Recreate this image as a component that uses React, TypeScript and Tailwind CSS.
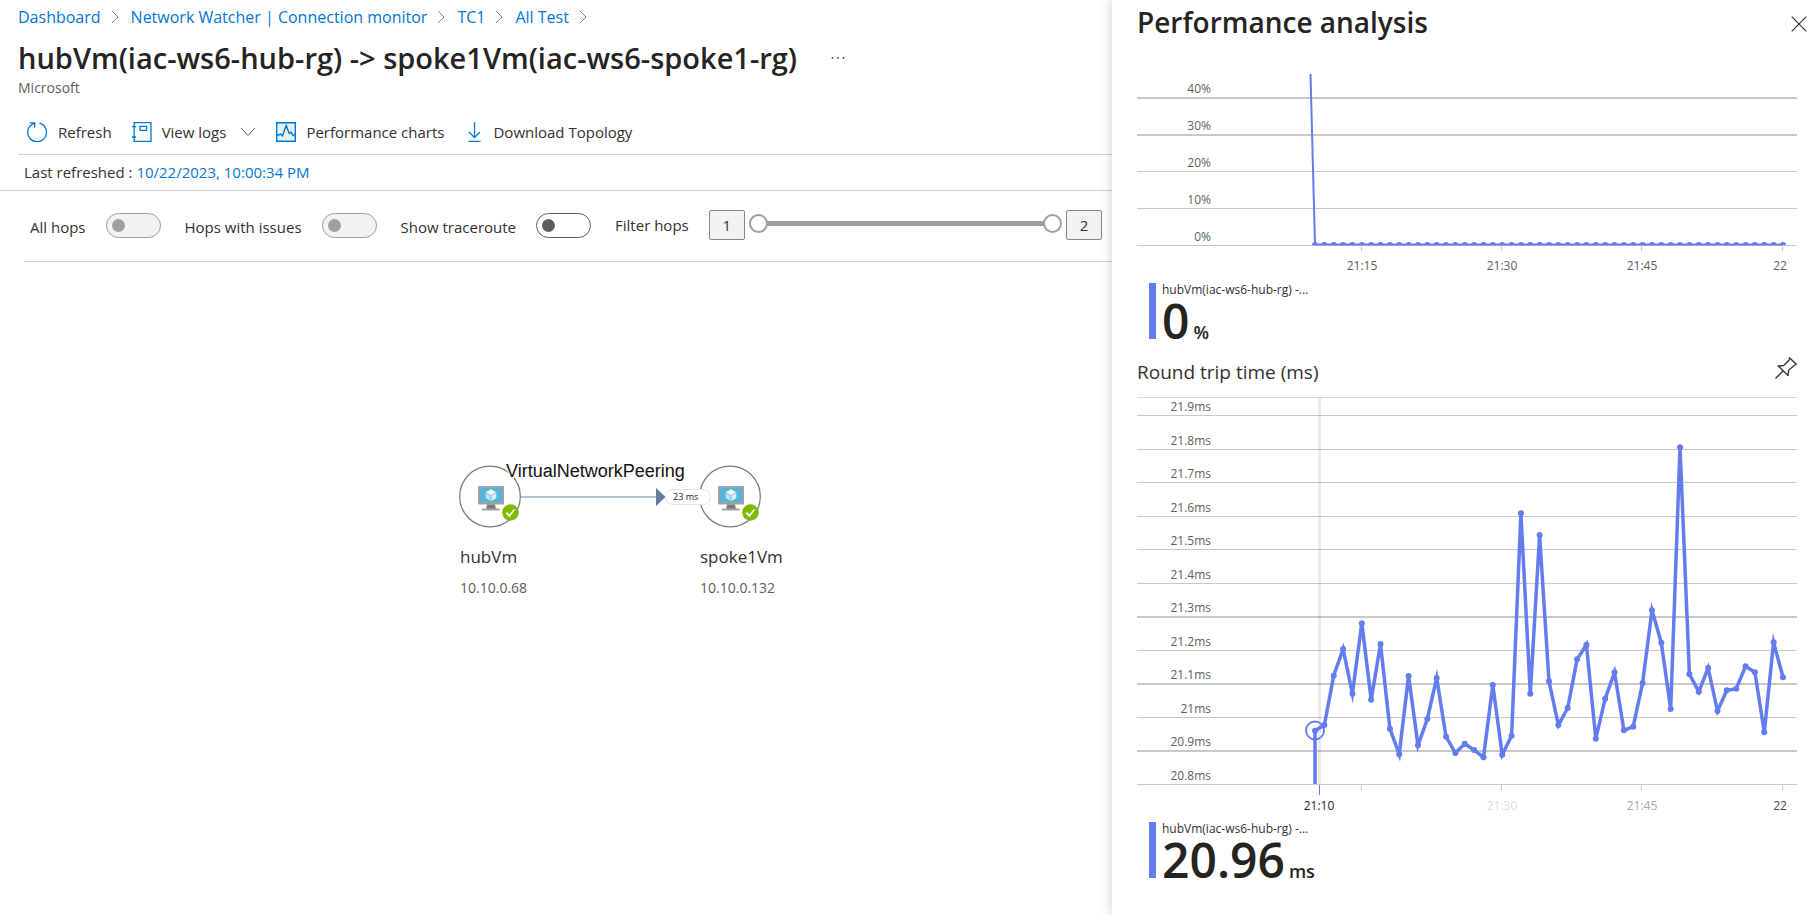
import { Fragment, useState } from "react";

const CHART_WIDTH = 660;
const FIRST_SAMPLE_X = 178;
const SAMPLE_STEP = 9.36;
const SERIES = "#637cef";
const GRID = "#c8c8c8";

/* Vertical position of each one-minute sample, 21:10 to 22:00 */
const rttSamples = [
  333.7, 328, 278.7, 252, 296.7, 226.3, 302.7, 247, 331.7, 357.3, 279, 348.3, 322, 281, 339.7, 356,
  346.7, 353, 360.3, 288, 357.7, 338.7, 116.3, 296.7, 138, 284.3, 328, 311, 262.3, 247.7, 341.7,
  301.7, 275.3, 333.3, 329.7, 286, 213.3, 245.7, 312, 50.3, 277, 294.7, 271, 314, 293.3, 291.7,
  269.3, 275.3, 335.3, 245.3, 280.3,
];

const rttGrid = [
  { label: "21.9ms", y: 18, h: 1 },
  { label: "21.8ms", y: 52, h: 1 },
  { label: "21.7ms", y: 85, h: 1 },
  { label: "21.6ms", y: 119, h: 1 },
  { label: "21.5ms", y: 152, h: 1 },
  { label: "21.4ms", y: 186, h: 1 },
  { label: "21.3ms", y: 219, h: 2 },
  { label: "21.2ms", y: 253, h: 1 },
  { label: "21.1ms", y: 286, h: 2 },
  { label: "21ms", y: 320, h: 1 },
  { label: "20.9ms", y: 353, h: 2 },
  { label: "20.8ms", y: 387, h: 1 },
];

const lossGrid = [
  { label: "40%", y: 23, h: 2 },
  { label: "30%", y: 60, h: 2 },
  { label: "20%", y: 97, h: 1 },
  { label: "10%", y: 134, h: 1 },
  { label: "0%", y: 171, h: 1 },
];

const sampleX = (i: number) => FIRST_SAMPLE_X + i * SAMPLE_STEP;

function Grid({ rows }: { rows: { label: string; y: number; h: number }[] }) {
  return (
    <>
      {rows.map((r) => (
        <Fragment key={r.label}>
          <rect x="0" y={r.y} width={CHART_WIDTH} height={r.h} fill={GRID} />
          <text x="74" y={r.y - 4} textAnchor="end" fill="#605e5c">
            {r.label}
          </text>
        </Fragment>
      ))}
    </>
  );
}

function LossChart() {
  return (
    <svg viewBox="0 0 660 204" className="block w-full text-xs" role="img" aria-label="Checks failed">
      <Grid rows={lossGrid} />
      {[225, 365, 505, 646].map((x) => (
        <rect key={x} x={x - 1} y="172" width="1" height="5" fill={GRID} />
      ))}
      <path d="M173.500 0L178 170.500H646" fill="none" stroke={SERIES} strokeWidth="2" />
      {rttSamples.map((_, i) => (
        <path key={i} d={`M${(sampleX(i) - 3).toFixed(1)} 171a3 3 0 0 1 6 0z`} fill={SERIES} />
      ))}
      <g fill="#605e5c" textAnchor="middle">
        <text x="225" y="196">21:15</text>
        <text x="365" y="196">21:30</text>
        <text x="505" y="196">21:45</text>
        <text x="643" y="196">22</text>
      </g>
    </svg>
  );
}

function RoundTripChart() {
  const line = rttSamples.map((y, i) => `${sampleX(i).toFixed(1)} ${y}`).join("L");
  return (
    <svg viewBox="0 0 660 420" className="block w-full text-xs" role="img" aria-label="Round trip time">
      <rect x="0" y="0" width={CHART_WIDTH} height="1" fill="#d8d8d8" />
      <Grid rows={rttGrid} />
      <rect x="181" y="0" width="3" height="387" fill="#000" fillOpacity="0.08" />
      {[225, 365, 505, 646].map((x) => (
        <rect key={x} x={x - 1} y="388" width="1" height="5" fill={GRID} />
      ))}
      <path d={`M178 387L${line}`} fill="none" stroke={SERIES} strokeWidth="3.500" strokeMiterlimit="6" />
      {rttSamples.map((y, i) => (
        <circle key={i} cx={sampleX(i)} cy={y} r="3" fill={SERIES} />
      ))}
      <circle cx="178" cy="333.500" r="9" fill="none" stroke={SERIES} strokeWidth="1.800" />
      <rect x="182" y="388" width="1" height="10" fill={SERIES} />
      <g textAnchor="middle">
        <text x="182" y="413" fill="#252423">21:10</text>
        <text x="365" y="413" fill="#dcdcdc">21:30</text>
        <text x="505" y="413" fill="#a6a6a6">21:45</text>
        <text x="643" y="413" fill="#484644">22</text>
      </g>
    </svg>
  );
}

function Metric({ value, unit }: { value: string; unit: string }) {
  return (
    <div className="ml-3 flex h-14 border-l-[7px] border-[#637cef] pl-[6px]">
      <div className="flex flex-col">
        <p className="text-xs leading-[13px] text-[#323130]">hubVm(iac-ws6-hub-rg) -...</p>
        <p className="flex items-baseline gap-1 font-semibold leading-[50px] text-[#252423]">
          <span className="text-[48px]">{value}</span>
          <span className="text-lg leading-5">{unit}</span>
        </p>
      </div>
    </div>
  );
}

function Crumb({ children }: { children: string }) {
  return (
    <li className="flex items-center gap-[10px]">
      <a href="#" className="text-[#0078d4]">{children}</a>
      <svg width="8" height="14" viewBox="0 0 8 14" fill="none" stroke="#8a8886" aria-hidden="true">
        <path d="M1 1L7 7L1 13" />
      </svg>
    </li>
  );
}

function RefreshIcon() {
  return (
    <svg width="20" height="20" viewBox="0 0 20 20" fill="none" stroke="#0078d4" strokeWidth="1.300" aria-hidden="true">
      <path d="M12.500 1.200A9.400 9.400 0 1 1 4.200 3L7.600 .9M2.700 .8H7.700V5.600" />
    </svg>
  );
}

function LogsIcon() {
  return (
    <svg width="20" height="20" viewBox="0 0 20 20" fill="none" stroke="#0078d4" strokeWidth="1.300" aria-hidden="true">
      <path d="M2.200 .7H19V19.300H2.200ZM0 4.700H4M0 15H4M8 4.300H14.600V8.300H8Z" />
    </svg>
  );
}

function ChartsIcon() {
  return (
    <svg width="20" height="20" viewBox="0 0 20 20" fill="none" stroke="#0078d4" strokeWidth="1.400" aria-hidden="true">
      <path d="M.7 .7H19.300V19.300H.7Z" fill="#e6f2fb" />
      <path d="M1 13.500L4.600 12L6.500 14L10.200 3.500L13.300 11.500L15 10L17 13.600L19 12.300" />
    </svg>
  );
}

function DownloadIcon() {
  return (
    <svg width="13" height="20" viewBox="0 0 13 20" fill="none" stroke="#0078d4" strokeWidth="1.300" aria-hidden="true">
      <path d="M6.500 0V15.500M1 10L6.500 15.500L12 10M.5 19.300H12.500" />
    </svg>
  );
}

function Toggle({ id, label, disabled }: { id: string; label: string; disabled?: boolean }) {
  return (
    <div className="flex items-center gap-5">
      <label htmlFor={id} className="pt-1">{label}</label>
      <input
        id={id}
        type="checkbox"
        role="switch"
        disabled={disabled}
        className="flex h-[25px] w-[55px] appearance-none items-center rounded-full border border-[#605e5c] bg-white px-[5px] before:size-[13px] before:rounded-full before:bg-[#605e5c] checked:justify-end disabled:border-[#a19f9d] disabled:bg-[#f3f2f1] disabled:before:bg-[#a19f9d]"
      />
    </div>
  );
}

const hopBox =
  "h-[30px] w-9 rounded-[2px] border border-[#8a8886] bg-[#f3f2f1] text-center text-[15px] text-[#323130]";
const rangeInput =
  "pointer-events-none col-start-1 row-start-1 h-[19px] w-full appearance-none bg-transparent [&::-webkit-slider-thumb]:pointer-events-auto [&::-webkit-slider-thumb]:size-[19px] [&::-webkit-slider-thumb]:appearance-none [&::-webkit-slider-thumb]:rounded-full [&::-webkit-slider-thumb]:border-2 [&::-webkit-slider-thumb]:border-[#a19f9d] [&::-webkit-slider-thumb]:bg-white";

function HopFilter() {
  const [low, setLow] = useState(1);
  const [high, setHigh] = useState(2);
  return (
    <div className="flex min-w-0 flex-1 items-center">
      <span id="filter-hops" className="mr-5 whitespace-nowrap">Filter hops</span>
      <input aria-label="First hop" readOnly value={low} className={hopBox} />
      <div className="mx-1 grid flex-1 items-center pb-1" role="group" aria-labelledby="filter-hops">
        <div className="col-start-1 row-start-1 mx-2 h-[5px] bg-[#a19f9d]" />
        <input type="range" aria-label="Lowest hop" min={1} max={2} value={low} onChange={(e) => setLow(Number(e.target.value))} className={rangeInput} />
        <input type="range" aria-label="Highest hop" min={1} max={2} value={high} onChange={(e) => setHigh(Number(e.target.value))} className={rangeInput} />
      </div>
      <input aria-label="Last hop" readOnly value={high} className={hopBox} />
    </div>
  );
}

function VmNode({ x, name, ip }: { x: number; name: string; ip: string }) {
  return (
    <g transform={`translate(${x} 0)`}>
      <circle cx="31" cy="36.500" r="30.300" fill="#fff" stroke="#7a7a7a" strokeWidth="1.300" />
      <rect x="19" y="26" width="26" height="18.500" rx="0.800" fill="#a0a1a2" />
      <rect x="20.500" y="27.500" width="23" height="14.500" fill="#59b4d9" />
      <path d="M28 44.500H36L37 49H27Z" fill="#7a7a7a" />
      <rect x="23" y="48.500" width="17.500" height="2" fill="#a0a1a2" />
      <path d="M32 29.300L37.300 32.200L32 35.200L26.700 32.200Z" fill="#fff" />
      <path d="M26.700 33L31.600 35.800V41L26.700 38.300Z" fill="#b9e1f1" />
      <path d="M37.300 33L32.400 35.800V41L37.300 38.300Z" fill="#d9eff8" />
      <circle cx="51.500" cy="52.500" r="8.300" fill="#7fba00" />
      <path d="M47.300 52.700L50.300 55.800L55.500 49.500" fill="none" stroke="#fff" strokeWidth="1.800" />
      <text x="1" y="103" fontSize="17" fill="#323130">{name}</text>
      <text x="1" y="133" fontSize="14" fill="#605e5c">{ip}</text>
    </g>
  );
}

function Topology() {
  return (
    <svg width="330" height="150" viewBox="0 0 330 150" role="img" aria-label="Topology">
      <VmNode x={0} name="hubVm" ip="10.10.0.68" />
      <VmNode x={240} name="spoke1Vm" ip="10.10.0.132" />
      <path d="M62 37H198" stroke="#b3c1d1" strokeWidth="2" />
      <path d="M197 28L206.500 37L197 46Z" fill="#5f7d9c" />
      <rect x="206.500" y="29.500" width="45" height="15" rx="7.500" fill="#fff" stroke="#e3e3e3" />
      <text x="214" y="40" fontSize="9" fill="#252423">23 ms</text>
      <text
        x="47"
        y="17"
        fontSize="18"
        fill="#111"
        stroke="#fff"
        strokeWidth="3"
        paintOrder="stroke"
        className="font-['Liberation_Sans',sans-serif]"
      >
        VirtualNetworkPeering
      </text>
    </svg>
  );
}

const command = "flex items-center text-[15px] leading-5";

export default function App() {
  return (
    <div className="flex min-h-screen bg-white font-['Open_Sans',sans-serif] text-[15px] text-[#323130]">
      <main className="min-w-0 flex-1">
        <nav aria-label="Breadcrumb" className="pl-[18px] pt-[5px]">
          <ol className="flex gap-3 text-base leading-6">
            <Crumb>Dashboard</Crumb>
            <Crumb>Network Watcher | Connection monitor</Crumb>
            <Crumb>TC1</Crumb>
            <Crumb>All Test</Crumb>
          </ol>
        </nav>
        <header className="pl-[18px] pt-[9px]">
          <div className="flex items-center gap-[34px]">
            <h1 className="whitespace-nowrap text-[29px] font-semibold leading-10 text-[#252423]">
              hubVm(iac-ws6-hub-rg) -&gt; spoke1Vm(iac-ws6-spoke1-rg)
            </h1>
            <button type="button" aria-label="More">
              <svg width="14" height="4" viewBox="0 0 14 4" fill="#484644">
                <circle cx="1.500" cy="2" r="0.900" />
                <circle cx="7" cy="2" r="0.900" />
                <circle cx="12.500" cy="2" r="0.900" />
              </svg>
            </button>
          </div>
          <p className="text-sm leading-5 text-[#605e5c]">Microsoft</p>
        </header>
        <div className="ml-[18px] flex h-[57px] items-center border-b border-[#d2d0ce] pl-[9px] pt-[12px]">
          <button type="button" className={`${command} gap-[11px]`}><RefreshIcon />Refresh</button>
          <button type="button" className={`${command} ml-5 gap-[10px]`}>
            <LogsIcon />View logs
            <svg width="16" height="10" viewBox="0 0 16 10" fill="none" stroke="#605e5c" className="ml-1" aria-hidden="true">
              <path d="M1 1L8 8.500L15 1" />
            </svg>
          </button>
          <button type="button" className={`${command} ml-5 gap-[10px]`}><ChartsIcon />Performance charts</button>
          <button type="button" className={`${command} ml-6 gap-3`}><DownloadIcon />Download Topology</button>
        </div>
        <div className="flex h-9 items-center border-b border-[#d2d0ce] pl-6">
          <p>Last refreshed : <a href="#" className="text-[#0078d4]">10/22/2023, 10:00:34 PM</a></p>
        </div>
        <div className="ml-6 flex h-[71px] items-center gap-6 border-b border-[#d2d0ce] pb-[2px] pl-[6px] pr-[10px]">
          <Toggle id="all-hops" label="All hops" disabled />
          <Toggle id="issue-hops" label="Hops with issues" disabled />
          <Toggle id="traceroute" label="Show traceroute" />
          <HopFilter />
        </div>
        <section className="pl-[459px] pt-[198px]">
          <Topology />
        </section>
      </main>

      <aside className="w-[703px] shrink-0 bg-white pl-[25px] pr-[18px] shadow-[0_0_12px_rgba(0,0,0,0.2)]">
        <header className="-mr-[10px] flex items-center justify-between pt-[2px]">
          <h2 className="text-[28px] font-semibold leading-10 text-[#252423]">Performance analysis</h2>
          <button type="button" aria-label="Close" className="pt-1">
            <svg width="16" height="16" viewBox="0 0 16 16" fill="none" stroke="#323130" strokeWidth="1.200">
              <path d="M.7 .7L15.300 15.300M15.300 .7L.7 15.300" />
            </svg>
          </button>
        </header>
        <div className="pt-8"><LossChart /></div>
        <div className="pt-[5px]"><Metric value="0" unit="%" /></div>
        <div className="flex items-center justify-between pb-[5px] pt-[13px]">
          <h3 className="text-[19px] leading-10">Round trip time (ms)</h3>
          <button type="button" aria-label="Pin chart" className="pb-2">
            <svg width="22" height="22" viewBox="0 0 22 22" fill="none" stroke="#323130" strokeWidth="1.300" strokeLinejoin="round">
              <path d="M14.500 .8L21.300 7.300L19.500 8.300L13.600 13.200L13 18.500L3.200 9L8.700 8.500L14.300 3ZM8 14L.5 21.500" />
            </svg>
          </button>
        </div>
        <RoundTripChart />
        <div className="pt-[5px]"><Metric value="20.96" unit="ms" /></div>
      </aside>
    </div>
  );
}
